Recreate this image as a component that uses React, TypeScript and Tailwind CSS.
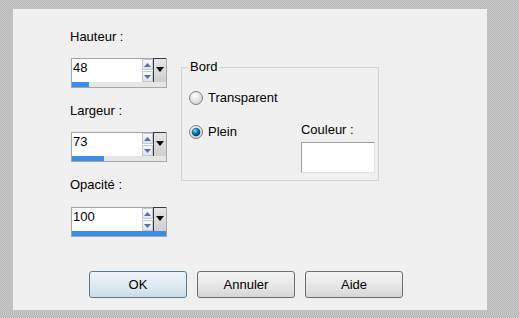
import React from "react";

const font = { fontFamily: '"Liberation Sans", Arial, sans-serif' };

function Spin({ value, bar }: { value: string; bar: number }) {
  return (
    <div className="ml-[1px] flex h-[30px] w-[96px] flex-col border border-[#a7a7a7] bg-white">
      <div className="flex h-[23px]">
        <div className="flex-1 bg-white pl-[1px] pt-[1px] text-[13px] leading-[16px] text-black">{value}</div>
        <div className="flex w-[11px] flex-col bg-white">
          <div className="flex h-[11px] items-center justify-center border border-[#c3cad6] bg-gradient-to-b from-[#f6f8fb] to-[#dfe5ee]">
            <svg width="7" height="4" viewBox="0 0 7 4"><path d="M0 4 L3.5 0 L7 4 Z" fill="#5e6f9e" /></svg>
          </div>
          <div className="mt-[1px] flex h-[11px] items-center justify-center border border-[#c3cad6] bg-gradient-to-b from-[#f6f8fb] to-[#dfe5ee]">
            <svg width="7" height="4" viewBox="0 0 7 4"><path d="M0 0 L3.5 4 L7 0 Z" fill="#5e6f9e" /></svg>
          </div>
        </div>
        <div className="mt-[-1px] flex h-[24px] w-[13px] items-start justify-center border-l border-t border-l-[#3a3a3a] border-t-[#3a3a3a] bg-gradient-to-b from-[#e6e6e6] to-[#cfcfcf] pt-[8px]">
          <svg width="8" height="5" viewBox="0 0 8 5"><path d="M0 0 L4 5 L8 0 Z" fill="#000" /></svg>
        </div>
      </div>
      <div className="h-[5px] bg-[#e6e6e6]">
        <div className="h-full bg-[#3b8de6]" style={{ width: bar }} />
      </div>
    </div>
  );
}

function Radio({ checked }: { checked: boolean }) {
  return (
    <svg width="14" height="14" viewBox="0 0 14 14">
      <defs>
        <radialGradient id="rg-off" cx="40%" cy="35%" r="70%">
          <stop offset="0%" stopColor="#ffffff" />
          <stop offset="100%" stopColor="#cfcfcf" />
        </radialGradient>
        <radialGradient id="rg-on" cx="40%" cy="35%" r="65%">
          <stop offset="0%" stopColor="#7fe0ff" />
          <stop offset="45%" stopColor="#1a7fb8" />
          <stop offset="100%" stopColor="#0b2f55" />
        </radialGradient>
      </defs>
      <circle cx="7" cy="7" r="6.5" fill="url(#rg-off)" stroke="#7e7f7f" strokeWidth="1" />
      {checked && <circle cx="7" cy="7" r="4.3" fill="url(#rg-on)" />}
    </svg>
  );
}

function Button({ label, primary }: { label: string; primary?: boolean }) {
  return (
    <div
      className={
        "flex h-[27px] w-[98px] items-center justify-center rounded-[3px] border text-[13px] leading-[16px] text-black " +
        (primary
          ? "border-[#5b7a90] bg-gradient-to-b from-[#eef4f9] via-[#e1ebf2] to-[#cddde8]"
          : "border-[#707070] bg-gradient-to-b from-[#f4f4f4] via-[#e8e8e8] to-[#d6d6d6]")
      }
    >
      {label}
    </div>
  );
}

export default function App() {
  return (
    <div
      className="h-[318px] w-[519px] bg-[#c2c2c2] bg-[repeating-conic-gradient(#c8c8c8_0_25%,#b9b9b9_0_50%)] bg-[length:2px_2px] pl-[13px] pt-[9px]"
      style={font}
    >
      <div className="flex h-[301px] w-[474px] flex-col bg-[#f0f0f0] pt-[20px]">
        <div className="flex items-start">
          <div className="ml-[57px] flex w-[97px] flex-col text-[13px] leading-[16px] text-black">
            <div>Hauteur :</div>
            <div className="mt-[13px]"><Spin value="48" bar={17} /></div>
            <div className="mt-[15px]">Largeur :</div>
            <div className="mt-[13px]"><Spin value="73" bar={32} /></div>
            <div className="mt-[15px]">Opacité :</div>
            <div className="mt-[14px]"><Spin value="100" bar={94} /></div>
          </div>
          <fieldset className="ml-[14px] mt-[30px] h-[122px] w-[198px] border border-[#d3d3d3] pl-[7px] text-[13px] leading-[16px] text-black">
            <legend className="ml-[-1px] px-[2px]">Bord</legend>
            <div className="mt-[15px] flex items-center gap-[5px]">
              <Radio checked={false} />
              <span>Transparent</span>
            </div>
            <div className="mt-[16px] flex items-start">
              <div className="mt-[2px] flex items-center gap-[5px]">
                <Radio checked={true} />
                <span>Plein</span>
              </div>
              <div className="ml-[64px] flex flex-col">
                <span>Couleur :</span>
                <div className="mt-[4px] h-[31px] w-[74px] border border-[#a0a0a0] border-b-[#e3e3e3] border-r-[#e3e3e3] bg-white" />
              </div>
            </div>
          </fieldset>
        </div>
        <div className="ml-[76px] mt-[34px] flex gap-[10px]">
          <Button label="OK" primary />
          <Button label="Annuler" />
          <Button label="Aide" />
        </div>
      </div>
    </div>
  );
}
